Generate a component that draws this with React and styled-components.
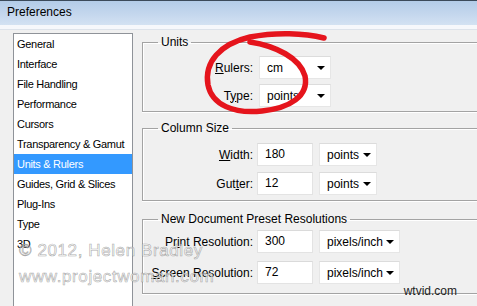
import React from "react";
import styled, { createGlobalStyle } from "styled-components";

const Global = createGlobalStyle`
  html, body {
    margin: 0;
    padding: 0;
    background: #f0f0f0;
    overflow: hidden;
  }
  * { box-sizing: border-box; }
`;

const items = [
  "General",
  "Interface",
  "File Handling",
  "Performance",
  "Cursors",
  "Transparency & Gamut",
  "Units & Rulers",
  "Guides, Grid & Slices",
  "Plug-Ins",
  "Type",
  "3D",
];

const Hot = ({ pre, ch, post }) => (
  <>
    {pre}
    <u>{ch}</u>
    {post}
  </>
);

const App = () => {
  return (
    <Window>
      <Global />
      <TitleBar>Preferences</TitleBar>
      <TitleEdge />
      <Body>
        <List>
          {items.map((it) => (
            <Item key={it} $active={it === "Units & Rulers"}>
              {it}
            </Item>
          ))}
        </List>
        <Content>
          <Group $pt={7} $pb={4}>
            <Legend>Units</Legend>
            <Rows $gap={5}>
              <Label>
                <Hot pre="" ch="R" post="ulers:" />
              </Label>
              <Select $w={72}>
                cm
                <Arrow />
              </Select>
              <Label>
                <Hot pre="T" ch="y" post="pe:" />
              </Label>
              <Select $w={72}>
                points
                <Arrow />
              </Select>
            </Rows>
          </Group>

          <Group $mt={9} $pt={8} $pb={5}>
            <Legend>Column Size</Legend>
            <Rows $gap={6}>
              <Label>
                <Hot pre="" ch="W" post="idth:" />
              </Label>
              <Input>180</Input>
              <Select $w={58}>
                points
                <Arrow />
              </Select>
              <Label>
                <Hot pre="Gut" ch="t" post="er:" />
              </Label>
              <Input>12</Input>
              <Select $w={58}>
                points
                <Arrow />
              </Select>
            </Rows>
          </Group>

          <Group $mt={11} $pt={4} $pb={9}>
            <Legend>New Document Preset Resolutions</Legend>
            <Rows $gap={8}>
              <Label>
                <Hot pre="Pr" ch="i" post="nt Resolution:" />
              </Label>
              <Input>300</Input>
              <Select $w={81}>
                pixels/inch
                <Arrow />
              </Select>
              <Label>
                <Hot pre="" ch="S" post="creen Resolution:" />
              </Label>
              <Input>72</Input>
              <Select $w={81}>
                pixels/inch
                <Arrow />
              </Select>
            </Rows>
          </Group>
        </Content>
      </Body>

      <Scribble viewBox="0 0 477 306">
        <path
          d="M250 42 C 276 46, 300 58, 305 76 C 309 96, 290 108, 262 111 C 234 114, 212 105, 208 85 C 204 62, 220 44, 250 37 C 276 32, 304 33, 324 38"
          fill="none"
          stroke="#e5141c"
          strokeWidth="5.5"
          strokeLinecap="round"
        />
      </Scribble>

      <Watermark>
        © 2012, Helen Bradley
        <br />
        www.projectwoman.com
      </Watermark>
      <Stamp>wtvid.com</Stamp>
    </Window>
  );
};

export default App;

const Window = styled.div`
  position: relative;
  width: 477px;
  height: 306px;
  overflow: hidden;
  background: #f0f0f0;
  font-family: "Liberation Sans", Arial, sans-serif;
  color: #000;
  display: flex;
  flex-direction: column;
`;

const TitleBar = styled.div`
  height: 25px;
  flex-shrink: 0;
  border-top: 1px solid #3b4a5a;
  background: linear-gradient(#b3cce8, #c6d8ee 60%, #d3e2f2);
  padding-left: 7px;
  font-size: 12px;
  line-height: 23px;
`;

const TitleEdge = styled.div`
  height: 5px;
  flex-shrink: 0;
  background: #f6f8fb;
  border-bottom: 1px solid #dde3ea;
`;

const Body = styled.div`
  flex: 1;
  display: flex;
  gap: 9px;
  padding: 3px 0 0 13px;
  min-height: 0;
`;

const List = styled.div`
  width: 120px;
  height: 290px;
  flex-shrink: 0;
  background: #fff;
  border: 1px solid #8f9399;
  border-bottom: none;
`;

const Item = styled.div`
  height: 20px;
  line-height: 20px;
  padding-left: 3px;
  font-size: 11px;
  letter-spacing: -0.3px;
  white-space: nowrap;
  color: ${({ $active }) => ($active ? "#fff" : "#000")};
  background: ${({ $active }) => ($active ? "#3399ff" : "transparent")};
`;

const Content = styled.div`
  flex: 1;
  margin-right: -14px;
  padding-top: 2px;
`;

const Group = styled.fieldset`
  margin: ${({ $mt }) => $mt || 0}px 0 0 0;
  padding: ${({ $pt }) => $pt}px 0 ${({ $pb }) => $pb}px 3px;
  border: 1px solid #a3a3a3;
  box-shadow: inset 1px 1px 0 #fff, 0 1px 0 #fff;
`;

const Legend = styled.legend`
  margin-left: 12px;
  padding: 0 3px;
  font-size: 12px;
  line-height: 14px;
`;

const Rows = styled.div`
  display: grid;
  grid-template-columns: 107px max-content max-content;
  column-gap: 4px;
  row-gap: ${({ $gap }) => $gap}px;
  align-items: center;
`;

const Label = styled.div`
  grid-column: 1;
  text-align: right;
  font-size: 12px;
  white-space: nowrap;
`;

const Input = styled.div`
  width: 56px;
  height: 23px;
  background: #fff;
  border: 1px solid #e3e3e3;
  border-top-color: #dadada;
  padding-left: 7px;
  font-size: 12px;
  line-height: 21px;
`;

const Select = styled.div`
  width: ${({ $w }) => $w}px;
  height: 23px;
  margin-left: 2px;
  background: #fff;
  border: 1px solid #e6e6e6;
  border-top-color: #dcdcdc;
  padding: 0 5px 0 7px;
  display: flex;
  align-items: center;
  justify-content: space-between;
  font-size: 12px;
  white-space: nowrap;
`;

const Arrow = styled.span`
  width: 0;
  height: 0;
  border-left: 4px solid transparent;
  border-right: 4px solid transparent;
  border-top: 4px solid #000;
`;

const Scribble = styled.svg`
  position: absolute;
  left: 0;
  top: 0;
  width: 477px;
  height: 306px;
  pointer-events: none;
`;

const Watermark = styled.div`
  position: absolute;
  left: 19px;
  top: 238px;
  font-family: "Liberation Sans", Arial, sans-serif;
  font-size: 17px;
  line-height: 26px;
  letter-spacing: 0.6px;
  color: rgba(255, 255, 255, 0.75);
  -webkit-text-stroke: 0.6px rgba(110, 110, 110, 0.6);
  white-space: nowrap;
  pointer-events: none;
`;

const Stamp = styled.div`
  position: absolute;
  right: 20px;
  top: 284px;
  font-size: 12px;
  line-height: 14px;
  color: #222;
`;
